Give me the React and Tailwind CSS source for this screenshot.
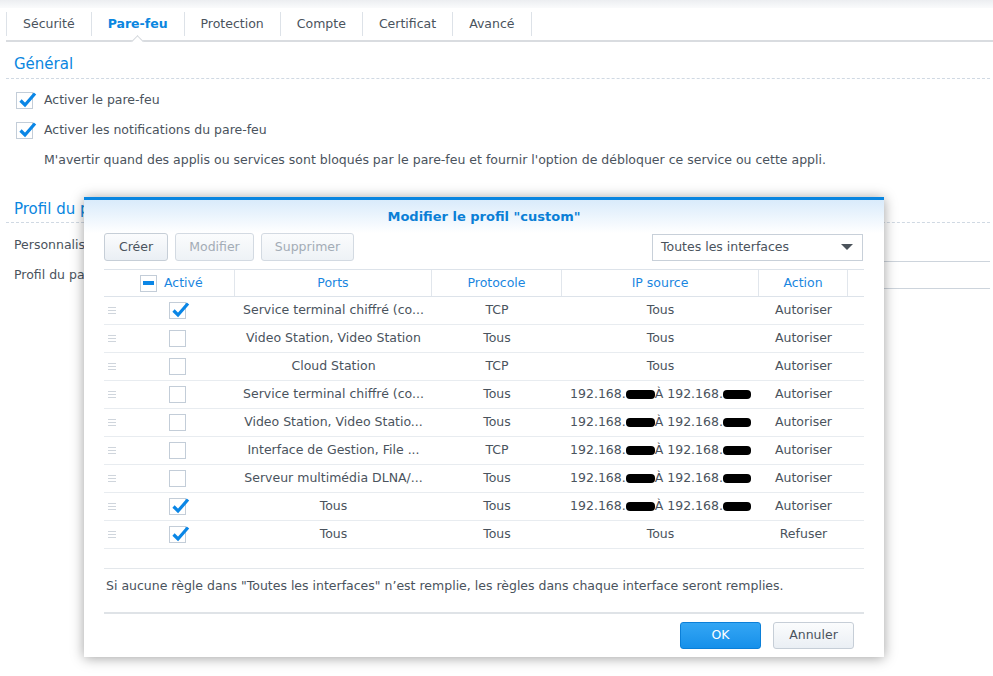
import React from "react";

const rows = [
  { on: true, ports: "Service terminal chiffré (co...", proto: "TCP", ip: "Tous", action: "Autoriser" },
  { on: false, ports: "Video Station, Video Station", proto: "Tous", ip: "Tous", action: "Autoriser" },
  { on: false, ports: "Cloud Station", proto: "TCP", ip: "Tous", action: "Autoriser" },
  { on: false, ports: "Service terminal chiffré (co...", proto: "Tous", ip: "hidden", action: "Autoriser" },
  { on: false, ports: "Video Station, Video Statio...", proto: "Tous", ip: "hidden", action: "Autoriser" },
  { on: false, ports: "Interface de Gestion, File ...", proto: "TCP", ip: "hidden", action: "Autoriser" },
  { on: false, ports: "Serveur multimédia DLNA/...", proto: "Tous", ip: "hidden", action: "Autoriser" },
  { on: true, ports: "Tous", proto: "Tous", ip: "hidden", action: "Autoriser" },
  { on: true, ports: "Tous", proto: "Tous", ip: "Tous", action: "Refuser" },
];

const tabs = ["Sécurité", "Pare-feu", "Protection", "Compte", "Certificat", "Avancé"];

function Check({ on }) {
  return (
    <span className="relative block w-[17px] h-[17px] border border-[#c3cdd8] bg-white shrink-0">
      {on && (
        <svg className="absolute left-[1px] top-[-3px]" width="19" height="19" viewBox="0 0 19 19">
          <path d="M2.5 10.5 L7 15 L17 3.5" fill="none" stroke="#0a86e6" strokeWidth="3.2" strokeLinejoin="miter" />
        </svg>
      )}
    </span>
  );
}

function Handle() {
  return (
    <span className="flex flex-col gap-[2px] w-[8px]">
      <span className="h-px bg-[#cfd5dc]" />
      <span className="h-px bg-[#cfd5dc]" />
      <span className="h-px bg-[#cfd5dc]" />
    </span>
  );
}

function Blot({ w }) {
  return <span className={`inline-block h-[9px] bg-black rounded-[4px] ${w}`} />;
}

function Ip() {
  return (
    <span className="flex items-center">
      <span>192.168.</span>
      <Blot w="w-[29px]" />
      <span>À 192.168.</span>
      <Blot w="w-[28px]" />
    </span>
  );
}

export default function App() {
  return (
    <div className="relative w-[993px] h-[676px] overflow-hidden bg-white text-[12.5px] text-[#4a535d] font-['DejaVu_Sans',sans-serif]">
      <div className="h-[8px] bg-gradient-to-b from-[#eceef1] to-[#fafbfc]" />

      {/* tabs */}
      <div className="ml-[6px] h-[34px] flex items-center border-b-2 border-[#d9dce0]">
        {tabs.map((t, i) => (
          <div key={t} className="relative h-full flex items-center">
            {i === 0 && <span className="w-px h-[24px] bg-[#dde2e8]" />}
            <span className={`px-4 ${t === "Pare-feu" ? "font-bold text-[#0a86e0]" : ""}`}>{t}</span>
            <span className="w-px h-[24px] bg-[#dde2e8]" />
            {t === "Pare-feu" && (
              <span className="absolute left-[41px] bottom-[-6px] w-[9px] h-[9px] bg-white border-l border-t border-[#d3d7dc] rotate-45" />
            )}
          </div>
        ))}
      </div>

      <div className="ml-[6px] mr-[3px]">
        <div className="pt-[12px] pb-[4px] pl-[8px] text-[15px] leading-[20px] text-[#0a86e0] border-b border-dashed border-[#d0d9e3]">
          Général
        </div>
        <div className="mt-[6px] pl-[10px]">
          <div className="h-[30px] flex items-center gap-[11px]">
            <Check on />
            <span>Activer le pare-feu</span>
          </div>
          <div className="h-[30px] flex items-center gap-[11px]">
            <Check on />
            <span>Activer les notifications du pare-feu</span>
          </div>
          <div className="h-[30px] flex items-center pl-[28px]">
            M'avertir quand des applis ou services sont bloqués par le pare-feu et fournir l'option de débloquer ce service ou cette appli.
          </div>
        </div>

        <div className="pt-[24px] pb-[3px] pl-[8px] text-[15px] leading-[20px] text-[#0a86e0] border-b border-dashed border-[#d0d9e3]">
          Profil du pare-feu
        </div>
        <div className="flex h-[39px]">
          <div className="w-[300px] pl-[8px] pt-[14px] leading-[16px]">Personnaliser</div>
          <div className="flex-1 border-b border-[#cdd4dc]" />
        </div>
        <div className="flex h-[27px]">
          <div className="w-[300px] pl-[8px] flex items-center">Profil du pare-feu :</div>
          <div className="flex-1 border-b border-[#cdd4dc]" />
        </div>
      </div>

      {/* dialog */}
      <div className="absolute left-[84px] top-[197px] w-[800px] h-[460px] bg-white border-t-[3px] border-[#0a86e0] shadow-[0_1px_12px_rgba(0,0,0,0.38)] flex flex-col">
        <div className="h-[33px] flex items-center justify-center bg-gradient-to-b from-[#d9ebfb] to-white text-[13px] font-bold text-[#0a7fd6]">
          Modifier le profil "custom"
        </div>

        <div className="px-5">
          <div className="flex items-center h-[28px] mb-[8px]">
            <button className="w-[64px] h-[28px] rounded-[3px] border border-[#c6ced7] bg-gradient-to-b from-[#fbfcfd] to-[#eaeff4] text-[#4a535d]">
              Créer
            </button>
            <button className="ml-[7px] w-[79px] h-[28px] rounded-[3px] border border-[#d3dae2] bg-gradient-to-b from-[#fbfcfd] to-[#eef2f6] text-[#a3acb6]">
              Modifier
            </button>
            <button className="ml-[7px] w-[93px] h-[28px] rounded-[3px] border border-[#d3dae2] bg-gradient-to-b from-[#fbfcfd] to-[#eef2f6] text-[#a3acb6]">
              Supprimer
            </button>
            <div className="ml-auto w-[211px] h-[27px] mr-[1px] border border-[#c8d0d9] flex items-center pl-[8px] pr-[9px]">
              <span className="flex-1">Toutes les interfaces</span>
              <span className="w-0 h-0 border-l-[6px] border-r-[6px] border-t-[6px] border-l-transparent border-r-transparent border-t-[#4b535b]" />
            </div>
          </div>

          {/* grid */}
          <div className="border-y border-[#dde3ea] h-[28px] grid grid-cols-[131px_197px_130px_197px_89px_16px] text-[#1a86df]">
            <div className="flex items-center pl-[36px] gap-[7px] border-r border-[#e1e6ec]">
              <span className="relative w-[17px] h-[17px] border border-[#c3cdd8] bg-white flex items-center justify-center">
                <span className="w-[11px] h-[4px] bg-[#0a86e6]" />
              </span>
              <span>Activé</span>
            </div>
            <div className="flex items-center justify-center border-r border-[#e1e6ec]">Ports</div>
            <div className="flex items-center justify-center border-r border-[#e1e6ec]">Protocole</div>
            <div className="flex items-center justify-center border-r border-[#e1e6ec]">IP source</div>
            <div className="flex items-center justify-center border-r border-[#e1e6ec]">Action</div>
            <div />
          </div>
          <div className="h-[272px] border-b border-[#e3e7eb]">
            {rows.map((r, i) => (
              <div key={i} className="h-[28px] border-b border-[#e8ecf0] grid grid-cols-[131px_197px_130px_197px_89px_16px]">
                <div className="flex items-center pl-[4px]">
                  <Handle />
                  <span className="ml-[53px]">
                    <Check on={r.on} />
                  </span>
                </div>
                <div className="flex items-center justify-center whitespace-nowrap">{r.ports}</div>
                <div className="flex items-center justify-center">{r.proto}</div>
                <div className="flex items-center justify-center whitespace-nowrap">{r.ip === "hidden" ? <Ip /> : r.ip}</div>
                <div className="flex items-center justify-center">{r.action}</div>
                <div />
              </div>
            ))}
          </div>

          <div className="h-[43px] pt-[9px] pl-[2px] leading-[16px]">
            Si aucune règle dans "Toutes les interfaces" n’est remplie, les règles dans chaque interface seront remplies.
          </div>

          <div className="border-t-2 border-[#dfe3e7] pt-[8px] pr-[10px] flex justify-end gap-[12px]">
            <button className="w-[81px] h-[27px] rounded-[3px] border border-[#0b7fd8] bg-gradient-to-b from-[#33a6f4] to-[#1590ea] text-white">
              OK
            </button>
            <button className="w-[81px] h-[27px] rounded-[3px] border border-[#c6ced7] bg-gradient-to-b from-[#fbfcfd] to-[#eaeff4] text-[#4a535d]">
              Annuler
            </button>
          </div>
        </div>
      </div>
    </div>
  );
}
